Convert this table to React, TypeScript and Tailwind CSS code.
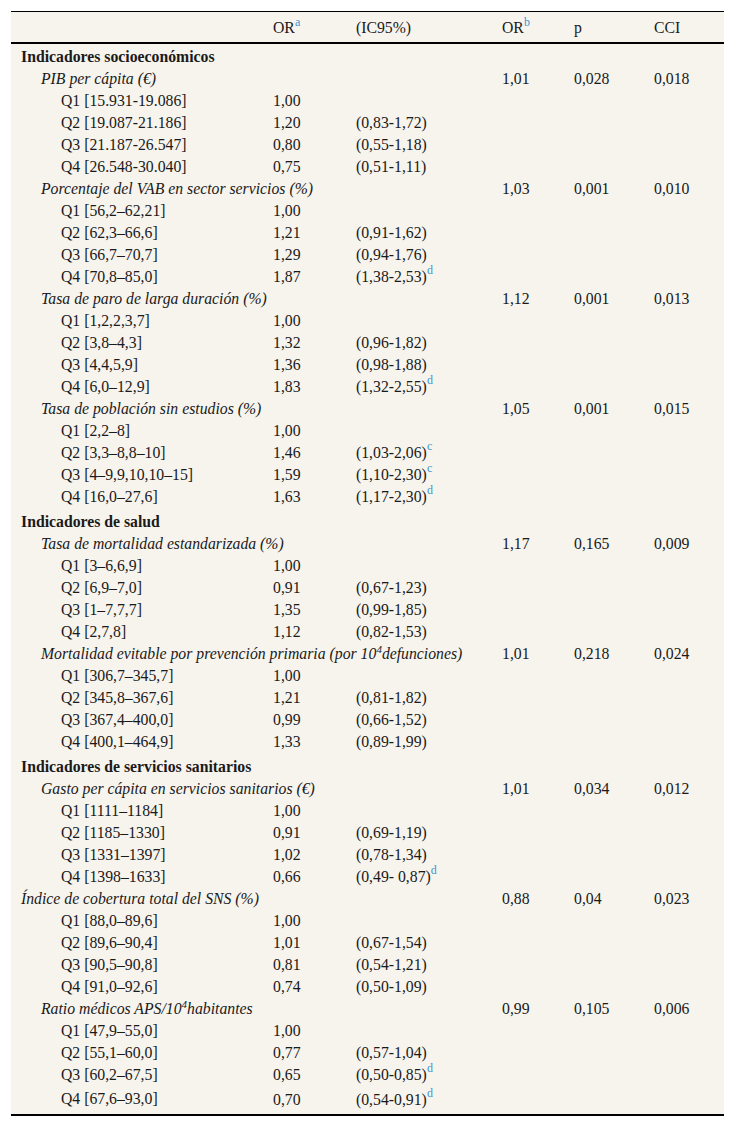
import React from 'react';

type Row =
  | { kind: 'section'; label: string }
  | { kind: 'sub'; label: React.ReactNode; orb: string; p: string; cci: string; indent?: boolean }
  | { kind: 'q'; label: string; or: string; ic?: string; note?: string };

const Sup = ({ children }: { children: React.ReactNode }) => (
  <sup className="text-[#3b96d0] text-[12px] -top-[0.6em]">{children}</sup>
);

const rows: Row[] = [
  { kind: 'section', label: 'Indicadores socioeconómicos' },
  { kind: 'sub', label: 'PIB per cápita (€)', orb: '1,01', p: '0,028', cci: '0,018' },
  { kind: 'q', label: 'Q1 [15.931-19.086]', or: '1,00' },
  { kind: 'q', label: 'Q2 [19.087-21.186]', or: '1,20', ic: '(0,83-1,72)' },
  { kind: 'q', label: 'Q3 [21.187-26.547]', or: '0,80', ic: '(0,55-1,18)' },
  { kind: 'q', label: 'Q4 [26.548-30.040]', or: '0,75', ic: '(0,51-1,11)' },
  { kind: 'sub', label: 'Porcentaje del VAB en sector servicios (%)', orb: '1,03', p: '0,001', cci: '0,010' },
  { kind: 'q', label: 'Q1 [56,2–62,21]', or: '1,00' },
  { kind: 'q', label: 'Q2 [62,3–66,6]', or: '1,21', ic: '(0,91-1,62)' },
  { kind: 'q', label: 'Q3 [66,7–70,7]', or: '1,29', ic: '(0,94-1,76)' },
  { kind: 'q', label: 'Q4 [70,8–85,0]', or: '1,87', ic: '(1,38-2,53)', note: 'd' },
  { kind: 'sub', label: 'Tasa de paro de larga duración (%)', orb: '1,12', p: '0,001', cci: '0,013' },
  { kind: 'q', label: 'Q1 [1,2,2,3,7]', or: '1,00' },
  { kind: 'q', label: 'Q2 [3,8–4,3]', or: '1,32', ic: '(0,96-1,82)' },
  { kind: 'q', label: 'Q3 [4,4,5,9]', or: '1,36', ic: '(0,98-1,88)' },
  { kind: 'q', label: 'Q4 [6,0–12,9]', or: '1,83', ic: '(1,32-2,55)', note: 'd' },
  { kind: 'sub', label: 'Tasa de población sin estudios (%)', orb: '1,05', p: '0,001', cci: '0,015' },
  { kind: 'q', label: 'Q1 [2,2–8]', or: '1,00' },
  { kind: 'q', label: 'Q2 [3,3–8,8–10]', or: '1,46', ic: '(1,03-2,06)', note: 'c' },
  { kind: 'q', label: 'Q3 [4–9,9,10,10–15]', or: '1,59', ic: '(1,10-2,30)', note: 'c' },
  { kind: 'q', label: 'Q4 [16,0–27,6]', or: '1,63', ic: '(1,17-2,30)', note: 'd' },
  { kind: 'section', label: 'Indicadores de salud' },
  { kind: 'sub', label: 'Tasa de mortalidad estandarizada (%)', orb: '1,17', p: '0,165', cci: '0,009' },
  { kind: 'q', label: 'Q1 [3–6,6,9]', or: '1,00' },
  { kind: 'q', label: 'Q2 [6,9–7,0]', or: '0,91', ic: '(0,67-1,23)' },
  { kind: 'q', label: 'Q3 [1–7,7,7]', or: '1,35', ic: '(0,99-1,85)' },
  { kind: 'q', label: 'Q4 [2,7,8]', or: '1,12', ic: '(0,82-1,53)' },
  {
    kind: 'sub',
    label: (
      <>
        Mortalidad evitable por prevención primaria (por 10<sup className="text-[11px]">4</sup>defunciones)
      </>
    ),
    orb: '1,01',
    p: '0,218',
    cci: '0,024',
  },
  { kind: 'q', label: 'Q1 [306,7–345,7]', or: '1,00' },
  { kind: 'q', label: 'Q2 [345,8–367,6]', or: '1,21', ic: '(0,81-1,82)' },
  { kind: 'q', label: 'Q3 [367,4–400,0]', or: '0,99', ic: '(0,66-1,52)' },
  { kind: 'q', label: 'Q4 [400,1–464,9]', or: '1,33', ic: '(0,89-1,99)' },
  { kind: 'section', label: 'Indicadores de servicios sanitarios' },
  { kind: 'sub', label: 'Gasto per cápita en servicios sanitarios (€)', orb: '1,01', p: '0,034', cci: '0,012' },
  { kind: 'q', label: 'Q1 [1111–1184]', or: '1,00' },
  { kind: 'q', label: 'Q2 [1185–1330]', or: '0,91', ic: '(0,69-1,19)' },
  { kind: 'q', label: 'Q3 [1331–1397]', or: '1,02', ic: '(0,78-1,34)' },
  { kind: 'q', label: 'Q4 [1398–1633]', or: '0,66', ic: '(0,49- 0,87)', note: 'd' },
  { kind: 'sub', label: 'Índice de cobertura total del SNS (%)', orb: '0,88', p: '0,04', cci: '0,023', indent: false },
  { kind: 'q', label: 'Q1 [88,0–89,6]', or: '1,00' },
  { kind: 'q', label: 'Q2 [89,6–90,4]', or: '1,01', ic: '(0,67-1,54)' },
  { kind: 'q', label: 'Q3 [90,5–90,8]', or: '0,81', ic: '(0,54-1,21)' },
  { kind: 'q', label: 'Q4 [91,0–92,6]', or: '0,74', ic: '(0,50-1,09)' },
  {
    kind: 'sub',
    label: (
      <>
        Ratio médicos APS/10<sup className="text-[11px]">4</sup>habitantes
      </>
    ),
    orb: '0,99',
    p: '0,105',
    cci: '0,006',
  },
  { kind: 'q', label: 'Q1 [47,9–55,0]', or: '1,00' },
  { kind: 'q', label: 'Q2 [55,1–60,0]', or: '0,77', ic: '(0,57-1,04)' },
  { kind: 'q', label: 'Q3 [60,2–67,5]', or: '0,65', ic: '(0,50-0,85)', note: 'd' },
  { kind: 'q', label: 'Q4 [67,6–93,0]', or: '0,70', ic: '(0,54-0,91)', note: 'd' },
];

export default function App() {
  return (
    <div className="bg-white min-h-screen px-[11px] pt-[11px] font-[family-name:Liberation_Serif,serif] text-[15.75px] text-[#1a1a1a]">
      <table className="w-full border-collapse table-fixed bg-[#f7f4ee] border-t border-b-2 border-black leading-[22px]">
        <colgroup>
          <col className="w-[262px]" />
          <col className="w-[83px]" />
          <col className="w-[146px]" />
          <col className="w-[72px]" />
          <col className="w-[80px]" />
          <col />
        </colgroup>
        <thead>
          <tr className="border-b-2 border-black h-[31px]">
            <th />
            <th className="text-left font-normal pt-[2px]">
              OR<Sup>a</Sup>
            </th>
            <th className="text-left font-normal pt-[2px]">(IC95%)</th>
            <th className="text-left font-normal pt-[2px]">
              OR<Sup>b</Sup>
            </th>
            <th className="text-left font-normal pt-[2px]">p</th>
            <th className="text-left font-normal pt-[2px]">CCI</th>
          </tr>
        </thead>
        <tbody>
          {rows.map((r, i) => {
            const last = i === rows.length - 1;
            if (r.kind === 'section') {
              return (
                <tr key={i}>
                  <td colSpan={6} className={`pl-[10px] ${i === 0 ? 'pt-[2px]' : 'pt-[3px]'} font-bold whitespace-nowrap`}>
                    {r.label}
                  </td>
                </tr>
              );
            }
            if (r.kind === 'sub') {
              return (
                <tr key={i}>
                  <td colSpan={3} className={`${r.indent === false ? 'pl-[10px]' : 'pl-[30px]'} italic whitespace-nowrap`}>
                    {r.label}
                  </td>
                  <td>{r.orb}</td>
                  <td>{r.p}</td>
                  <td>{r.cci}</td>
                </tr>
              );
            }
            return (
              <tr key={i}>
                <td className={`pl-[50px] whitespace-nowrap ${last ? 'pt-[2px] pb-[4px]' : ''}`}>{r.label}</td>
                <td>{r.or}</td>
                <td className="whitespace-nowrap">
                  {r.ic}
                  {r.note && <Sup>{r.note}</Sup>}
                </td>
                <td />
                <td />
                <td />
              </tr>
            );
          })}
        </tbody>
      </table>
    </div>
  );
}
